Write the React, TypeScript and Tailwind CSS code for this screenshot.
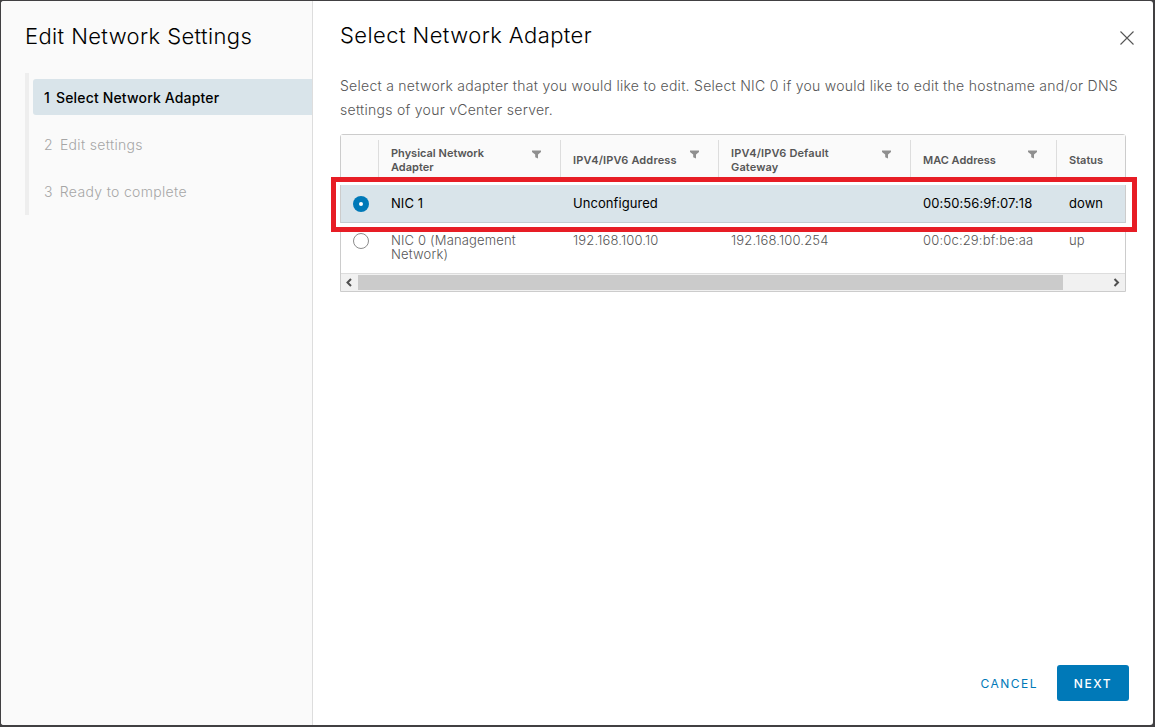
import { useState } from "react";
import clsx from "clsx";

type Adapter = {
  name: string;
  address: string;
  gateway: string;
  mac: string;
  status: string;
};

const steps = ["Select Network Adapter", "Edit settings", "Ready to complete"];

const adapters: Adapter[] = [
  {
    name: "NIC 1",
    address: "Unconfigured",
    gateway: "",
    mac: "00:50:56:9f:07:18",
    status: "down",
  },
  {
    name: "NIC 0 (Management Network)",
    address: "192.168.100.10",
    gateway: "192.168.100.254",
    mac: "00:0c:29:bf:be:aa",
    status: "up",
  },
];

const columns = [
  { label: "Physical Network Adapter", text: "w-[110px]", filter: true },
  { label: "IPV4/IPV6 Address", text: "pt-px tracking-[0.14px]", filter: true },
  { label: "IPV4/IPV6 Default Gateway", text: "w-[110px] tracking-[0.14px]", filter: true },
  { label: "MAC Address", text: "pt-px", filter: true },
  { label: "Status", text: "pt-px", filter: false },
];

const gridCols = "grid grid-cols-[37px_182px_158px_192px_146px_69px]";

function FilterIcon() {
  return (
    <svg className="h-[9px] w-[9px] shrink-0" viewBox="0 0 9 9" fill="#8f8f8f">
      <path d="M0 .5h9v1.4L6 4.6v3.9L3.2 7.3V4.6L0 1.9z" />
    </svg>
  );
}

function Radio({ checked, onChange }: { checked: boolean; onChange: () => void }) {
  return (
    <button
      aria-label="Select adapter"
      className={clsx(
        "flex size-4 items-center justify-center rounded-full",
        checked ? "bg-[#0079b8]" : "border border-[#8c8c8c] bg-white"
      )}
      onClick={onChange}
      type="button"
    >
      {checked ? <span className="size-1 rounded-full bg-white" /> : null}
    </button>
  );
}

function Sidebar() {
  return (
    <aside className="w-[312px] shrink-0 border-r border-[#dddddd] bg-[#fafafa] pt-[21px] pl-6">
      <h1 className="text-[22px] leading-7 font-light tracking-[0.38px] whitespace-nowrap text-black">
        Edit Network Settings
      </h1>
      <ol className="mt-[23px] flex h-[142px] flex-col gap-[11px] border-l-4 border-[#eeeeee] pt-[6px] pl-1 text-sm">
        {steps.map((step, i) => (
          <li
            key={step}
            className={clsx(
              "flex h-9 items-center rounded-l-[3px] pt-[2px] pl-[11px] whitespace-nowrap",
              i === 0
                ? "gap-[6px] bg-[#d9e4ea] font-medium tracking-[0.16px] text-black"
                : "gap-[7px] font-light tracking-[0.33px] text-[#a6a6a6]"
            )}
          >
            <span>{i + 1}</span>
            <span>{step}</span>
          </li>
        ))}
      </ol>
    </aside>
  );
}

function AdapterTable() {
  const [selected, setSelected] = useState(0);

  return (
    <div className="relative mt-3 h-[158px] w-[786px] rounded-t-[3px] border border-[#cccccc]">
      <div className={clsx(gridCols, "h-[50px] bg-[#fafafa] pt-[5px] text-[11px] leading-[14px] font-semibold text-[#565656]")}>
        <div />
        {columns.map((col) => (
          <div key={col.label} className="flex items-center border-l border-[#dddddd] pb-[6px] pl-3">
            <span className={col.text}>{col.label}</span>
            {col.filter ? (
              <span className="mr-[19px] mb-[10px] ml-auto">
                <FilterIcon />
              </span>
            ) : null}
          </div>
        ))}
      </div>
      {adapters.map((a, i) => (
        <div
          key={a.name}
          className={clsx(
            gridCols,
            "border-b text-[13px] leading-[14px]",
            i === 0 ? "h-[38px] border-[#c4ccd0] pt-[11px]" : "h-[51px] border-[#dddddd] pt-[10px]",
            i === selected
              ? "bg-[#d9e4ea] tracking-[0.06px] text-black"
              : "bg-white font-light tracking-[0.17px] text-[#565656]"
          )}
        >
          <div className="pl-3">
            <Radio checked={i === selected} onChange={() => setSelected(i)} />
          </div>
          <div className="pl-[13px]">{a.name}</div>
          <div className="pl-[13px]">{a.address}</div>
          <div className="pl-[13px]">{a.gateway}</div>
          <div className="pl-[13px]">{a.mac}</div>
          <div className="pl-[13px]">{a.status}</div>
        </div>
      ))}
      <div className="flex h-[17px] items-center bg-[#f1f1f1]">
        <svg className="w-[17px]" height="17" viewBox="0 0 17 17" fill="none" stroke="#505050" strokeWidth="2">
          <path d="M10 5 6.5 8.5 10 12" />
        </svg>
        <div className="h-[15px] w-[705px] bg-[#cbcbcb]" />
        <svg className="ml-auto w-[17px]" height="17" viewBox="0 0 17 17" fill="none" stroke="#505050" strokeWidth="2">
          <path d="m6.5 5 3.5 3.5L6.5 12" />
        </svg>
      </div>
      {/* highlight around the first row */}
      <div className="pointer-events-none absolute top-[42px] -left-[10px] h-[55px] w-[806px] border-[5px] border-[#e71d25]">
        <div className="h-[3px] bg-white" />
        <div className="mt-[38px] h-1 bg-white" />
      </div>
    </div>
  );
}

export default function App() {
  return (
    <div className="h-[727px] w-[1155px] overflow-hidden bg-[#414042] pt-px pr-[2px] pb-[2px] pl-px font-[Inter,'Open_Sans',sans-serif]">
      <div className="flex h-full overflow-hidden rounded-[3px] bg-white">
        <Sidebar />
        <main className="flex min-w-0 flex-1 flex-col pt-[20px] pr-6 pb-6 pl-[27px]">
          <header className="flex justify-between">
            <h2 className="text-[22px] leading-7 font-light tracking-[0.42px] whitespace-nowrap text-black">
              Select Network Adapter
            </h2>
            <button aria-label="Close" className="mt-[10px] -mr-[5px] size-[14px]" type="button">
              <svg viewBox="0 0 14 14" fill="none" stroke="#565656" strokeWidth="1.1">
                <path d="m.5.5 13 13M13.5.5l-13 13" />
              </svg>
            </button>
          </header>
          <p className="mt-[25px] text-sm leading-6 font-light tracking-[0.27px] whitespace-nowrap text-[#565656]">
            Select a network adapter that you would like to edit. Select NIC 0 if you would like to edit the hostname and/or DNS
            <br />
            settings of your vCenter server.
          </p>
          <AdapterTable />
          <footer className="mt-auto flex justify-end gap-[19px] text-xs">
            <button className="pt-[2px] tracking-[1.5px] text-[#0079b8]" type="button">
              CANCEL
            </button>
            <button className="h-9 w-[72px] rounded-[3px] bg-[#0079b8] pt-[2px] font-medium tracking-[1.6px] text-white" type="button">
              NEXT
            </button>
          </footer>
        </main>
      </div>
    </div>
  );
}
